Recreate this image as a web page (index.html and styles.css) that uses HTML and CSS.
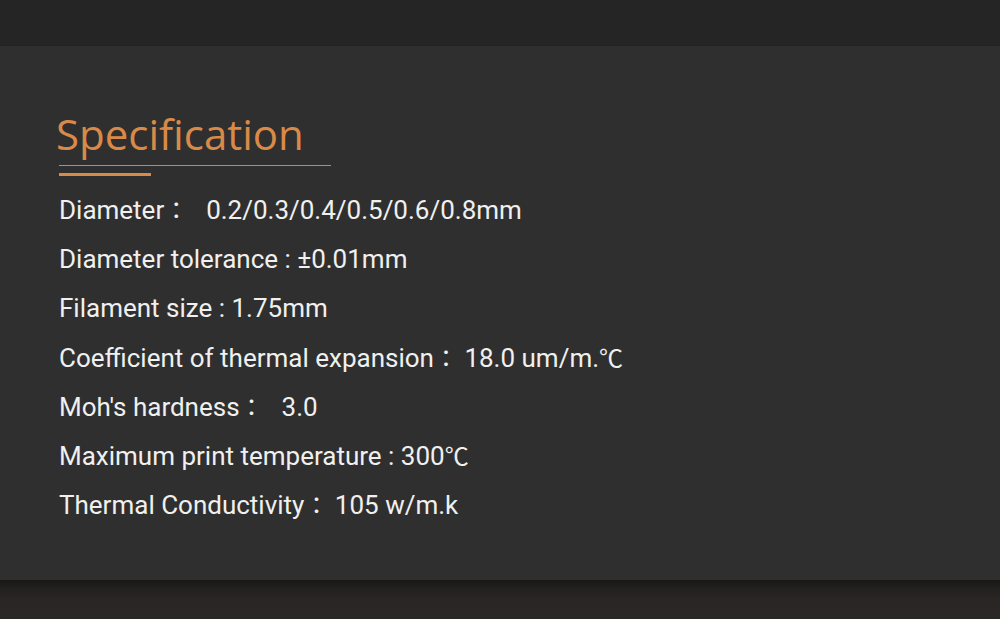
FILE: index.html
```html
<!DOCTYPE html>
<html lang="en">
<head>
<meta charset="utf-8">
<title>Specification</title>
<link rel="stylesheet" href="styles.css">
</head>
<body>
<div class="page">
  <div class="top-band"></div>
  <section class="panel">
    <h1 class="title">Specification</h1>
    <div class="rule-thin"></div>
    <div class="rule-thick"></div>
    <ul class="specs">
      <li>Diameter<span class="fw">：</span>&nbsp;&nbsp;<span class="gap">0.2/0.3/0.4/0.5/0.6/0.8mm</span></li>
      <li>Diameter tolerance : ±0.01mm</li>
      <li>Filament size : 1.75mm</li>
      <li>Coefficient of thermal expansion<span class="fw">：</span> 18.0 um/m.<span class="fw">℃</span></li>
      <li>Moh's hardness<span class="fw">：</span>&nbsp;&nbsp;<span class="gap">3.0</span></li>
      <li>Maximum print temperature : 300<span class="fw">℃</span></li>
      <li>Thermal Conductivity<span class="fw">：</span> 105 w/m.k</li>
    </ul>
  </section>
  <div class="bottom-band"></div>
</div>
</body>
</html>
```
FILE: styles.css
```css
html, body {
  margin: 0;
  padding: 0;
}
body {
  width: 1000px;
  height: 619px;
  overflow: hidden;
  background: #262424;
}
.page {
  display: flex;
  flex-direction: column;
  height: 619px;
}
.top-band {
  height: 45px;
  background: #252525;
  border-bottom: 1px solid #222222;
}
.panel {
  height: 534px;
  background: #2f2f2f;
  padding: 0 0 0 59px;
  box-sizing: border-box;
  display: flex;
  flex-direction: column;
}
.title {
  margin: 63px 0 0 -3px;
  font-family: "Open Sans", sans-serif;
  font-weight: 400;
  font-size: 42px;
  line-height: 50px;
  color: #d98a48;
  letter-spacing: 0;
}
.rule-thin {
  margin-top: 6px;
  width: 272px;
  height: 1px;
  background: #d08647;
}
.rule-thick {
  margin-top: 7px;
  width: 92px;
  height: 3px;
  background: #d98a48;
}
.specs {
  list-style: none;
  margin: 10px 0 0 0;
  padding: 0;
  font-family: Roboto, "Noto Sans CJK TC", sans-serif;
  font-size: 26px;
  color: #f0f0ef;
}
.specs li {
  height: 49.2px;
  line-height: 49px;
  white-space: nowrap;
}
.fw {
  font-family: "Noto Sans CJK TC", sans-serif;
  font-size: 24px;
  line-height: 0;
}
.gap {
  margin-left: 5px;
}
.bottom-band {
  flex: 1;
  background: linear-gradient(#181716 0px, #221f1f 8px, #2a2626 20px, #2a2727 100%);
}
```
